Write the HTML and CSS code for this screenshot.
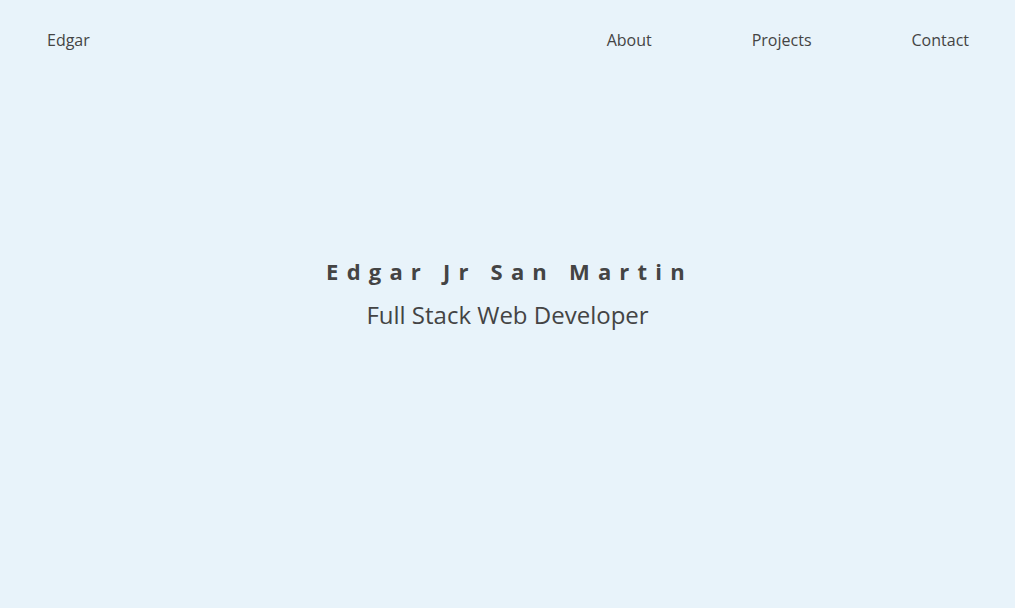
FILE: index.html
```html
<!DOCTYPE html>
<html>
<head>
<meta charset="utf-8">
<link rel="stylesheet" href="styles.css">
</head>
<body>
<header class="nav">
  <a class="brand" href="#">Edgar</a>
  <nav class="links">
    <a href="#">About</a>
    <a href="#">Projects</a>
    <a href="#">Contact</a>
  </nav>
</header>
<main class="hero">
  <h1 class="name">Edgar Jr San Martin</h1>
  <p class="role">Full Stack Web Developer</p>
</main>
</body>
</html>
```
FILE: styles.css
```css
html, body {
  margin: 0;
  padding: 0;
  height: 100%;
}
body {
  background: #e8f3fa;
  color: #444;
  font-family: "Open Sans", "Noto Sans", sans-serif;
}
a {
  color: #444;
  text-decoration: none;
}
.nav {
  display: flex;
  justify-content: space-between;
  align-items: center;
  padding: 29px 46px 0 47px;
  font-size: 16px;
  line-height: 22px;
}
.links {
  display: flex;
  gap: 100px;
}
.hero {
  display: flex;
  flex-direction: column;
  align-items: center;
  padding-top: 205px;
}
.name {
  margin: 0;
  font-size: 22px;
  font-weight: 700;
  letter-spacing: 8.2px;
  line-height: 30px;
  padding-left: 4px;
}
.role {
  margin: 13px 0 0;
  font-size: 24px;
  line-height: 32px;
}
```
